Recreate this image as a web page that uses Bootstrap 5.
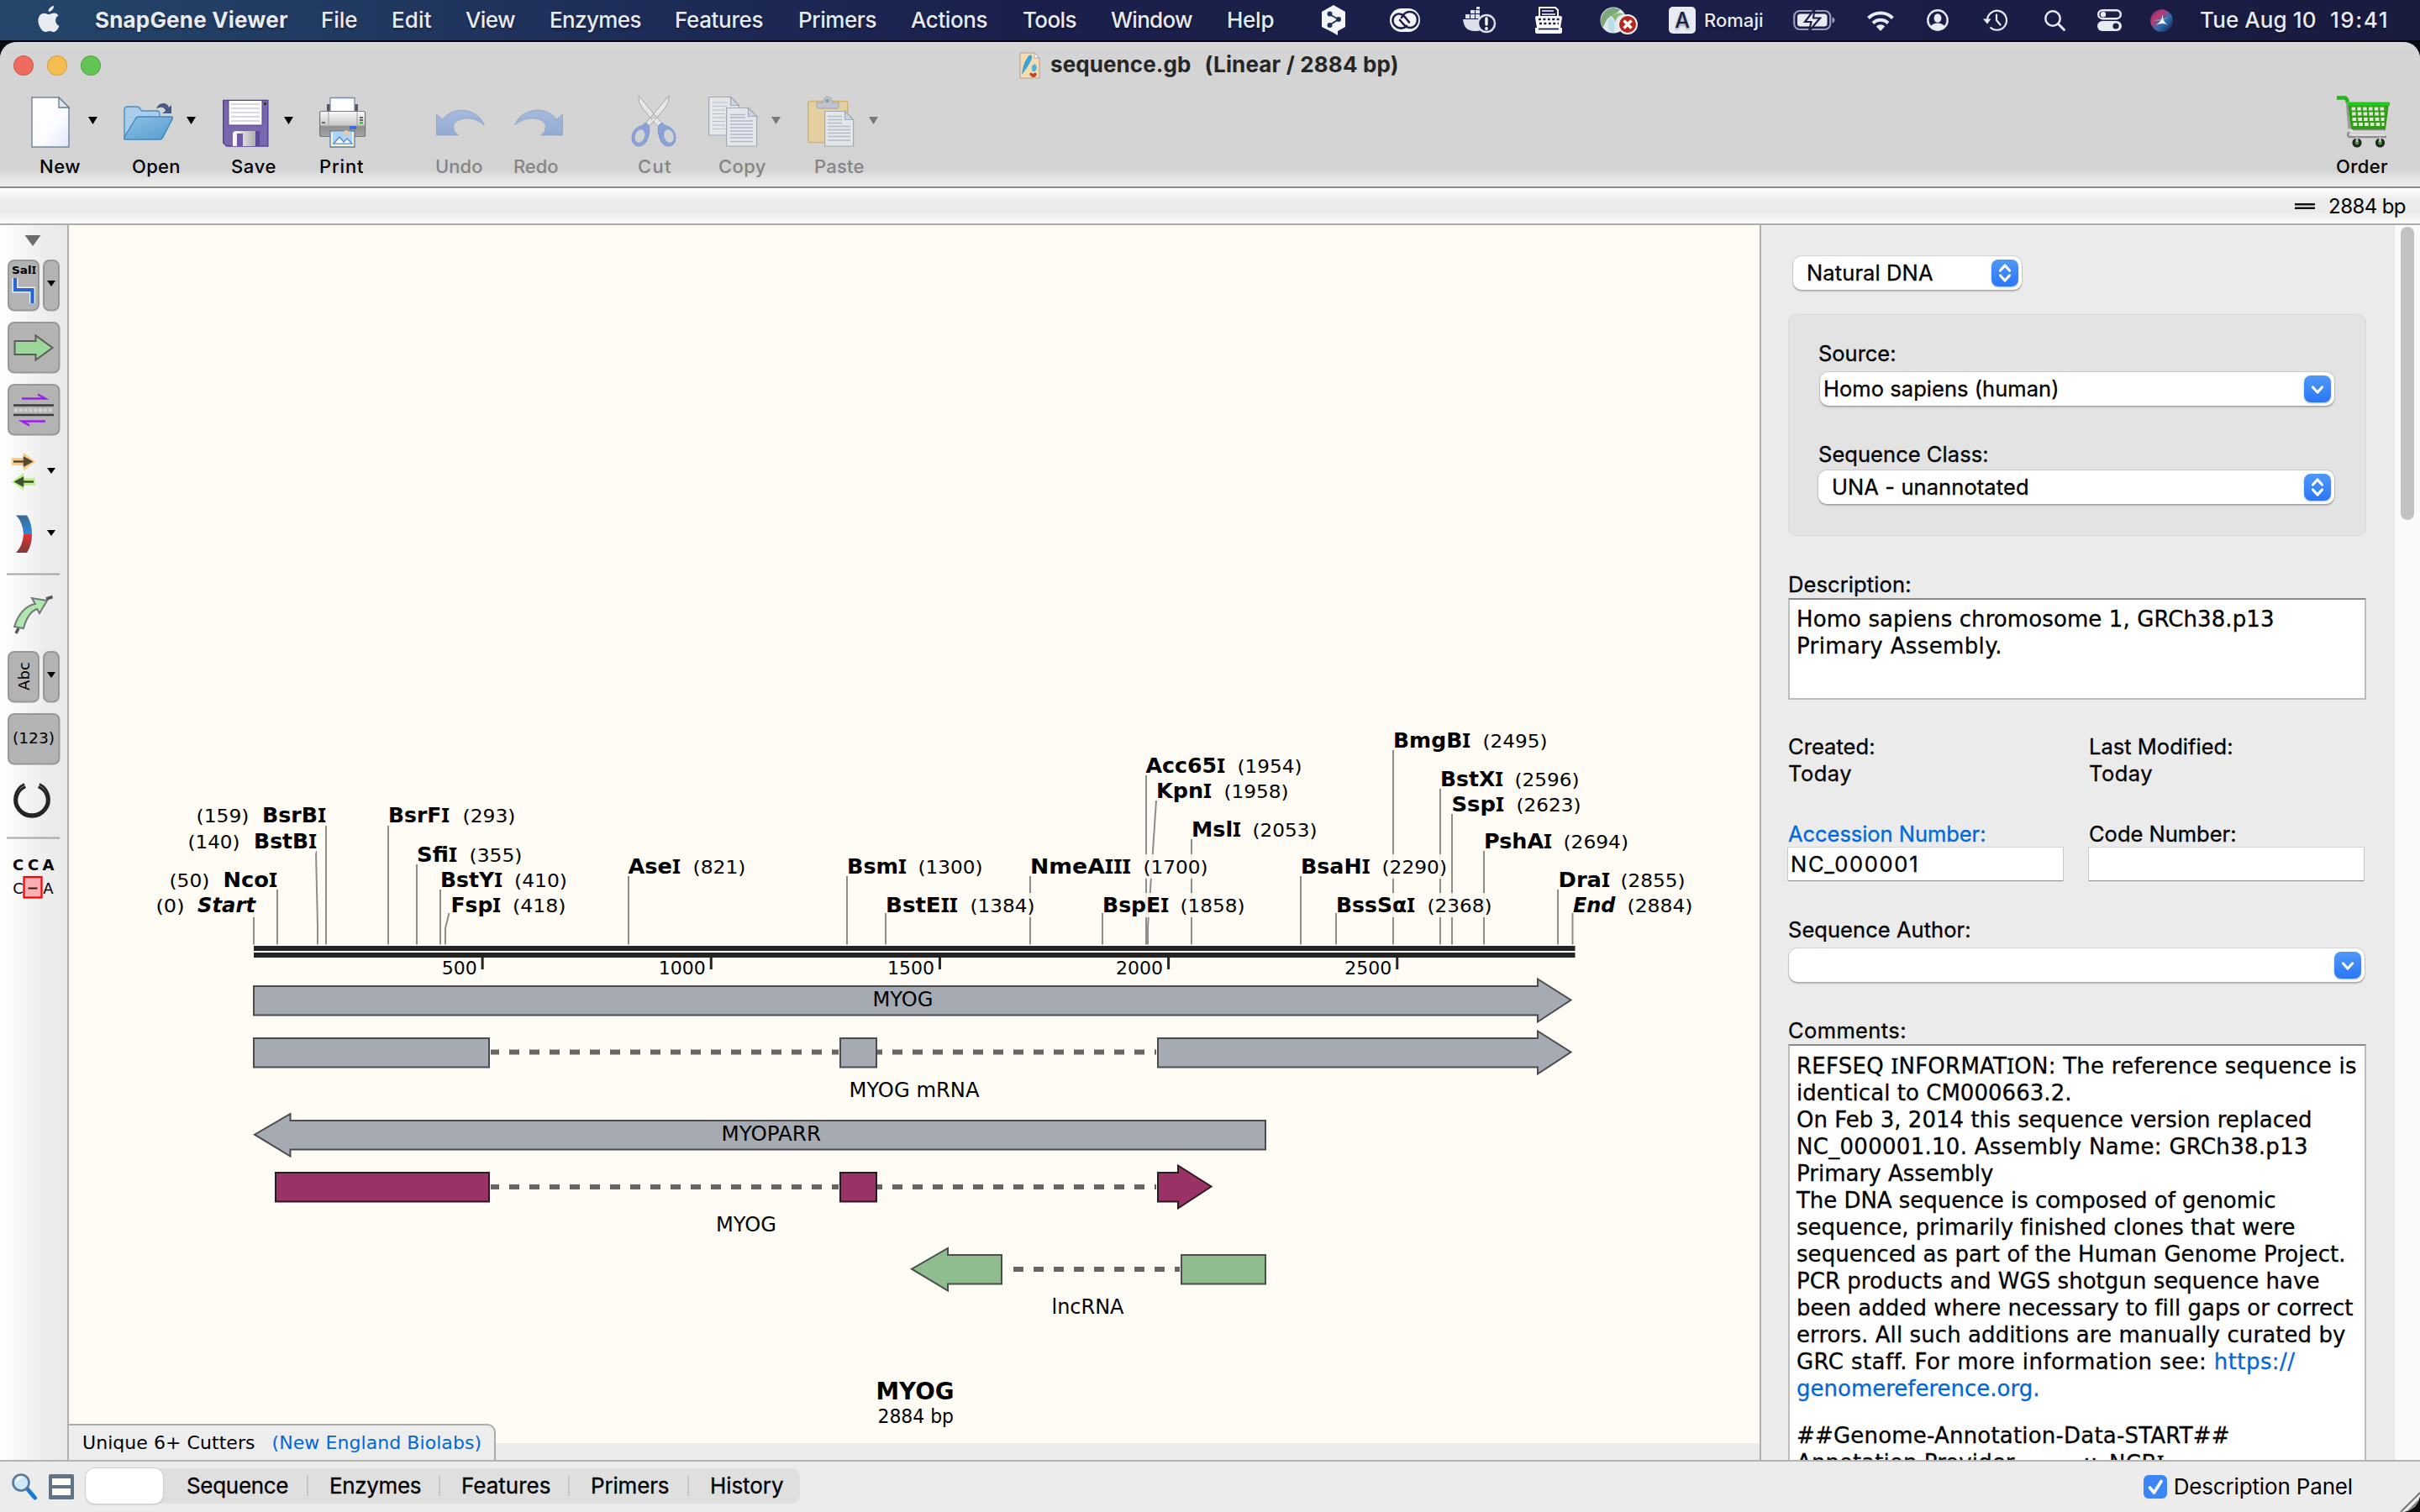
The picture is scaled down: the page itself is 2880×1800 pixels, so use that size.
<!DOCTYPE html>
<html lang="en">
<head>
<meta charset="utf-8">
<title>SnapGene Viewer</title>
<link href="https://cdn.jsdelivr.net/npm/bootstrap@5.3.0/dist/css/bootstrap.min.css" rel="stylesheet">
<style>
:root{--ui:Inter,"Liberation Sans",sans-serif;--vd:"DejaVu Sans",sans-serif}
html,body{height:100%;margin:0}
body{width:2880px;height:1800px;overflow:hidden;background:#0b0b12;font-family:var(--ui);font-size:26px;line-height:32px;color:#000}
svg{display:block;overflow:visible;flex:none}
.fit{display:inline-block;white-space:pre}
.vd{font-family:var(--vd)}
.cap-i{font-family:"Noto Sans",sans-serif}
.blue-link{color:#0068d9}

/* system menu bar */
.menubar{height:50px;padding:1px 0 1px 44px;border-bottom:2px solid #04060f;color:#e9ebf2;font-weight:500;
 background:linear-gradient(90deg,#25466a 0,#213a62 400px,#1d2b57 800px,#1a1f4b 1250px,#1b1f4a 2100px,#191b3f 100%);
 display:grid;align-items:center;text-shadow:0 2px 3px rgba(0,0,0,.4);
 grid-template-columns:69px 269px 84px 88px 100px 149px 147px 134px 133px 105px 138px 112px 81px 88px 85px 78px 82px 42px 106px 88px 71px 67px 73px 63px 63px 59px 155px auto}
.menubar b{font-weight:700}

/* window */
.app-window{height:1750px;border-radius:20px 20px 22px 0;overflow:hidden;background:#ececec}
.window-head{height:174px;border-bottom:2px solid #8b8b8b;background:linear-gradient(#d8d8d8 0,#d4d4d4 12px,#d3d3d3 152px,#e8e8e8 165px,#ebebeb)}
.title-row{height:56px;display:grid;grid-template-columns:1212px auto 1fr;align-items:center}
.lights{display:flex;gap:16px;padding-left:16px}
.light{width:24px;height:24px;border-radius:50%;border:1px solid rgba(0,0,0,.15)}
.light-r{background:#ee6a5f}.light-y{background:#f5bd4f}.light-g{background:#61c454}
.title-text{font-weight:700;color:#262626;padding-left:11px;margin-top:-2px}
.tools{display:grid;grid-template-columns:110px 118px 115px 139px 92px 140px 92px 118px 1819px auto;padding:7px 0 0 37px;font-size:22px;font-weight:500}
.tools .tool-label{line-height:28px;display:block;margin-top:7px;white-space:pre}
.off{color:#858585}
.lm1{margin-left:-1px}.l0{margin-left:0}.l1{margin-left:1px}.l8{margin-left:8px}.l11{margin-left:10px}.l12{margin-left:12px}
.infobar{height:44px;border-bottom:2px solid #ababab;background:linear-gradient(#fff 0,#ececec 14px,#ebebeb 28px,#fbfbfb 42px);padding:1px 17px 0 0;font-size:24px}

/* body of the window */
.work{height:1472px;border-bottom:2px solid #b4b4b4}
.rail{width:82px;border-right:2px solid #b0b0b0;background:linear-gradient(90deg,#fff 0,#ececec 56px,#e9e9e9)}
.map-pane{width:2012px;background:#fffcf5;position:relative}
.map-foot{height:20px;background:#ebebeb;position:absolute;left:0;right:0;bottom:0}
.set-tab{position:absolute;left:0;bottom:0;height:43px;width:508px;background:#ededed;border:2px solid #aaa;border-left:0;border-bottom:0;border-radius:0 10px 0 0;padding:2px 0 0 16px;font-family:var(--vd);font-size:22px;line-height:38px;display:flex;gap:20px}
.panel{width:786px;border-left:2px solid #b0b0b0;background:#ebebeb;font-size:25.5px;-webkit-text-stroke:.3px}
.panel-body{width:753px;padding:0 0 0 32px;overflow:hidden}
.panel-body>*{flex:none}
.track{width:31px;background:#fafafa;border-left:1px solid #e3e3e3;padding:2px 0 0 7px}
.thumb{width:16px;height:349px;border-radius:8px;background:#c2c2c2}
.pop{background:#fff;border-radius:10px;height:40px;box-shadow:0 0 0 1px rgba(0,0,0,.1),0 2px 2px rgba(0,0,0,.22);display:flex;align-items:center;justify-content:space-between;padding-right:4px}
.knob{width:32px;height:32px;border-radius:8px;background:linear-gradient(#4f99f9,#2a76f5);box-shadow:0 1px 2px rgba(0,40,140,.35)}
.group-box{width:688px;height:264px;border-radius:10px;border:1px solid #d9d9d9;background:#e3e3e3;padding:0 37px 0 35px;margin-top:29px}
.text-area{width:688px;background:#fff;border:2px solid #bcbcbc;border-top-color:#898989;padding:7px 0 0 8px;font-family:var(--vd);font-size:26px;white-space:pre}
.field{width:327px;height:39px;background:#fff;box-shadow:0 0 0 1px rgba(0,0,0,.1),0 1px 1px rgba(0,0,0,.3);padding-left:3px;line-height:39px}

/* bottom strip */
.strip{height:60px;background:#ececec;padding-left:14px}
.segs{height:42px;width:850px;background:#dfdfdf;border-radius:10px;display:grid;grid-template-columns:120px 170px 157px 154px 142px auto;align-items:center}
.seg-on{width:92px;height:42px;background:#fff;border-radius:11px;box-shadow:0 0 0 1px #cfcfcf,0 1px 2px rgba(0,0,0,.3)}
.seg{position:relative;-webkit-text-stroke:.3px}
.seg:not(:last-child)::after{content:"";position:absolute;right:25px;top:4px;height:24px;width:2px;background:#c6c6c6}
</style>
</head>
<body>

<nav class="menubar">
 <svg width="28" height="34" viewBox="0 0 28 34"><path fill="#e9ebf2" d="M20 0c.3 3.300-2.800 7-6.300 6.800C13.300 3.600 16.700.4 20 0zM25.500 11.600c-2.400 1.500-3.400 3.500-3.400 5.900 0 3 1.800 5.200 4.300 6.200-1 3-3.500 7.300-6.300 7.300-1.900 0-2.700-1.100-5.100-1.100s-3.300 1.100-5.200 1.100C6 31 1.400 23.500 1.400 17.600c0-5.600 3.600-8.900 7.300-8.900 2.300 0 3.900 1.400 5.700 1.400 1.700 0 3.500-1.600 6.300-1.600 1.900 0 3.700 1.100 4.800 3.100z"/></svg>
 <b><span class="fit" data-w="227">SnapGene Viewer</span></b>
 <span><span class="fit" data-w="41">File</span></span><span><span class="fit" data-w="45">Edit</span></span><span><span class="fit" data-w="57">View</span></span><span><span class="fit" data-w="107">Enzymes</span></span><span><span class="fit" data-w="103">Features</span></span><span><span class="fit" data-w="91">Primers</span></span><span><span class="fit" data-w="89">Actions</span></span><span><span class="fit" data-w="62">Tools</span></span><span><span class="fit" data-w="95">Window</span></span><span><span class="fit" data-w="54">Help</span></span>
 <svg width="30" height="36" viewBox="0 0 30 36"><path fill="#f4f5f8" d="M15 0 29 8v18l-9 5v5l-7-4L1 26V8z"/><path d="M10 11l11 6-11 7" fill="none" stroke="#1f3358" stroke-width="1.800"/><g fill="#1f3358"><circle cx="10.500" cy="10.500" r="3"/><circle cx="21" cy="17" r="3"/><circle cx="10.500" cy="24" r="3"/></g></svg>
 <svg width="38" height="28" viewBox="0 0 38 28"><rect x="1" y="0" width="36" height="28" rx="14" fill="#f4f5f8"/><g fill="none" stroke="#1b1f4a" stroke-width="2.600" stroke-linecap="round"><path d="M21 21c-2 2-5 3-8 2.500-5-.8-9-5-8.500-10S9 6 13 6.500c3 .3 5 2.500 7 5l4 5"/><path d="M15 11c2-4 5-7 9.500-7 5.500 0 9.500 4 9.500 9.500S30 23 25 23c-3.500 0-6-2-8-4.500L13 14"/></g></svg>
 <svg width="39" height="32" viewBox="0 0 39 32"><g fill="#dcdee8"><path d="M0 15h21a12 12 0 0 0 1 13c-3 1-6 1-8 1C5 29 1 24 0 15z"/><path d="M3 9h5v5H3zM9 9h5v5H9zM15 9h5v5h-5zM9 4h5v4H9zM15 4h5v4h-5zM16 0h4v3h-4z"/></g><circle cx="28" cy="20" r="10" fill="#1b1f4a" stroke="#dcdee8" stroke-width="2.400"/><path d="M28 14v7" stroke="#fff" stroke-width="3.400" stroke-linecap="round"/><circle cx="28" cy="26" r="1.900" fill="#fff"/></svg>
 <svg width="34" height="32" viewBox="0 0 34 32"><path d="M6 11V1h19l3 3v7" fill="none" stroke="#fff" stroke-width="2"/><path d="M9 5h14M9 9h16" stroke="#fff" stroke-width="1.600"/><path fill="#fff" d="M1 13q0-2 2-2h28q2 0 2 2l-2 12h2v5q0 2-2 2H3q-2 0-2-2v-5h2z"/><path d="M5 15h25M6 20h23" stroke="#1b1f4a" stroke-width="2.600" stroke-dasharray="3 2.400"/><path d="M5 26.500h24" stroke="#1b1f4a" stroke-width="1.800"/></svg>
 <svg width="45" height="33" viewBox="0 0 45 33"><circle cx="16" cy="16" r="15.500" fill="#dfe7ea"/><path d="M1 20C0 9 7 2 16 1l8 2c-2 4-6 5-11 8-6 4-7 10-9 13q-2-1-3-4z" fill="#7fa878"/><path d="M12 12c6 4 7 11 4 19-8-3-7-12-4-19z" fill="#b7dcea"/><path d="M13 11q8-6 16-2-8 0-11 9-1-5-5-7z" fill="#8ab87a"/><circle cx="33" cy="21" r="11" fill="#b3261b" stroke="#f1f1f1" stroke-width="2"/><path d="M28.500 16.500l9 9m0-9l-9 9" stroke="#fff" stroke-width="3.600"/></svg>
 <svg width="32" height="32" viewBox="0 0 32 32"><rect width="32" height="32" rx="5" fill="#e9ebf2"/><text x="16" y="25" text-anchor="middle" font-family="Inter" font-size="25" font-weight="500" fill="#1b1f4a">A</text></svg>
 <span style="font-size:22px"><span class="fit" data-w="68">Romaji</span></span>
 <svg width="50" height="26" viewBox="0 0 50 26"><rect x="1.200" y="2" width="43" height="22" rx="6.500" fill="none" stroke="#9b9dba" stroke-width="2.200"/><rect x="5" y="5.500" width="35.500" height="15" rx="3.500" fill="#e9ebf2"/><path d="M46.500 9.500v7q3-1 3-3.500t-3-3.500z" fill="#9b9dba"/><path d="M25.500 0 14 15h7.500L19 26l13-15.500h-8z" fill="#e9ebf2" stroke="#1b1f4a" stroke-width="2.200"/></svg>
 <svg width="32" height="25" viewBox="0 0 32 25"><g fill="none" stroke="#e9ebf2" stroke-width="4"><path d="M1.500 9.500a20.500 20.500 0 0 1 29 0"/><path d="M7 15.500a12.800 12.800 0 0 1 18 0"/></g><path d="M16 25l-5.200-5.600a7.400 7.400 0 0 1 10.400 0z" fill="#e9ebf2"/></svg>
 <svg width="26" height="26" viewBox="0 0 26 26"><circle cx="13" cy="13" r="11.700" fill="none" stroke="#e9ebf2" stroke-width="2.400"/><ellipse cx="13" cy="10.500" rx="4.400" ry="5.300" fill="#e9ebf2"/><path d="M4 21q3-4.500 9-4.500t9 4.500a12 12 0 0 1-18 0z" fill="#e9ebf2"/></svg>
 <svg width="29" height="26" viewBox="0 0 29 26"><path d="M5 13A11.500 11.500 0 1 1 8.500 21.500" fill="none" stroke="#e9ebf2" stroke-width="2.200"/><path d="M0 11.500h9.500L5 17.500z" fill="#e9ebf2"/><path d="M16 6.500V13l4.500 5.500" fill="none" stroke="#e9ebf2" stroke-width="2.200" stroke-linecap="round"/></svg>
 <svg width="25" height="25" viewBox="0 0 25 25"><circle cx="10" cy="10" r="8.700" fill="none" stroke="#e9ebf2" stroke-width="2.500"/><path d="M16.500 16.500 23.500 23.500" stroke="#e9ebf2" stroke-width="2.900" stroke-linecap="round"/></svg>
 <svg width="29" height="26" viewBox="0 0 29 26"><rect x="1.200" y="1.200" width="26.600" height="10" rx="5" fill="none" stroke="#e9ebf2" stroke-width="2.400"/><circle cx="7" cy="6.200" r="3.200" fill="#e9ebf2"/><rect y="14" width="29" height="12" rx="6" fill="#e9ebf2"/><circle cx="22" cy="20" r="3.600" fill="#1b1f4a"/></svg>
 <svg width="27" height="27" viewBox="0 0 27 27"><defs><linearGradient id="si" x1="0" y1="0" x2="1" y2="1"><stop offset="0" stop-color="#4b2a86"/><stop offset=".3" stop-color="#c1386d"/><stop offset=".6" stop-color="#2b6fae"/><stop offset="1" stop-color="#1b1440"/></linearGradient></defs><circle cx="13.500" cy="13.500" r="13.300" fill="url(#si)"/><path d="M6 19q7-3 9-13-1 8 6 13-5-4-15 0z" fill="#f2f6ff"/><path d="M4 13q9 0 18-4-8 6-18 4z" fill="#7fe0e8" opacity=".8"/></svg>
 <span><span class="fit" data-w="136">Tue Aug 10</span></span><span><span class="fit" data-w="66">19:41</span></span>
</nav>

<main class="app-window">
 <header class="window-head">
  <div class="title-row">
   <div class="lights"><div class="light light-r"></div><div class="light light-y"></div><div class="light light-g"></div></div>
   <svg width="27" height="32" viewBox="0 0 27 32"><path d="M2 1h17l6 6v24H2z" fill="#f3ddb0" stroke="#b99" stroke-width="1"/><path d="M19 1l6 6h-6z" fill="#fff" stroke="#999" stroke-width=".800"/><path d="M4 27C5 17 8 8 14 3q4 2 1 7C12 16 8 22 4 27z" fill="#3ca3da"/><path d="M17 23q-3-6 2-9 5 3 1 9z" fill="#4db1e2"/><path d="M13 26q2-3 4 0 3-3 5 0-1 4-4 4t-5-4z" fill="#c8432f"/></svg>
   <div class="title-text d-flex"><span class="fit" data-w="165">sequence.gb</span><span class="fit ms-3" data-w="228">(Linear / 2884 bp)</span></div>
  </div>
  <div class="tools">
   <div><svg width="80" height="64" viewBox="37 114 80 64"><defs><linearGradient id="pg" x1="0" y1="0" x2="1" y2="1"><stop offset="0" stop-color="#fff"/><stop offset=".6" stop-color="#fbfcff"/><stop offset="1" stop-color="#dfe7f8"/></linearGradient></defs><path d="M38 117h32l12 12v47H38z" fill="url(#pg)" stroke="#76879c" stroke-width="1.500"/><path d="M70 117v12h12z" fill="#dde3ef" stroke="#63788f" stroke-width="1.300"/><path d="M105 140h11l-5.500 9z"/></svg><span class="tool-label l11"><span class="fit" data-w="46">New</span></span></div>
   <div><svg width="86" height="64" viewBox="147 114 86 64"><defs><linearGradient id="fo" x1="0" y1="0" x2="1" y2="1"><stop offset="0" stop-color="#8fc1e4"/><stop offset="1" stop-color="#559cd0"/></linearGradient></defs><path d="M148 165v-33q0-4 4-4h11q3 0 4 3l2 2h18q3 0 3 4v28z" fill="#a9cdea" stroke="#4a8fc2" stroke-width="1.400"/><path d="M161 143q1-3 4-3h39q2 0 1 3l-11 21q-1 3-4 3h-41q-2 0-1-3z" fill="url(#fo)" stroke="#3f87bd" stroke-width="1.400"/><path d="M186 131q2-8 10-7 4 1 5 5l3-3v10h-11l4-3q-1-4-4-4-4-1-7 2z" fill="#455b85"/><path d="M222 140h11l-5.500 9z"/></svg><span class="tool-label l11"><span class="fit" data-w="55">Open</span></span></div>
   <div><svg width="84" height="64" viewBox="265 114 84 64"><defs><linearGradient id="sh" x1="0" y1="0" x2="1" y2="0"><stop offset="0" stop-color="#fff"/><stop offset="1" stop-color="#a8a8a8"/></linearGradient></defs><path d="M265.800 120.500h53v54.500h-49l-4-4z" fill="#7a66ad" stroke="#54429a" stroke-width="1.500"/><path d="M272 120.500h40V150h-40z" fill="#fdfdff" stroke="#54429a"/><path d="M275 125h34M275 130h34M275 135h34M275 140h34M275 145h34" stroke="#c9ccd4" stroke-width="1.300"/><path d="M314 123h3v3h-3z" fill="#333"/><path d="M277 175v-14q0-4 4-4h25v18z" fill="url(#sh)"/><path d="M304 157h5v18h-5z" fill="#5a4699"/><path d="M282 160h7v15h-7z" fill="#6f5aa6"/><path d="M338 140h11l-5.500 9z"/></svg><span class="tool-label l11"><span class="fit" data-w="51">Save</span></span></div>
   <div><svg width="56" height="64" viewBox="380 114 56 64"><defs><linearGradient id="pr" x1="0" y1="0" x2="0" y2="1"><stop offset="0" stop-color="#fafafa"/><stop offset=".55" stop-color="#c9c9c9"/><stop offset=".6" stop-color="#8f8f8f"/><stop offset="1" stop-color="#a5a5a5"/></linearGradient></defs><path d="M389 125h37v38h-37z" fill="#555a66"/><path d="M393 117.500h29V134h-29z" fill="#fdfeff" stroke="#7b8ba3" stroke-width="1.300"/><rect x="380.600" y="133.500" width="54" height="30" rx="2" fill="url(#pr)" stroke="#777" stroke-width="1.200"/><path d="M391 134v16M425 134v16" stroke="#9c9c9c"/><path d="M383 146h4v2h-4zM428 140h4v2h-4zM428 143h4v2h-4z" fill="#666"/><path d="M428 146h4v2.500h-4z" fill="#2bd02b"/><path d="M416 151h8v4h-8z" fill="#3a6be0"/><path d="M393 157h29v19h-29z" fill="#f6f1cf" stroke="#5f7f9c" stroke-width="1.300"/><path d="M396 157.500h23V173h-23z" fill="#a9d6f5"/><circle cx="412" cy="159" r="3" fill="#f6c6a2"/><path d="M397 172l7-8 5 6 4-4 6 6z" fill="#fff" stroke="#4d82d8" stroke-width="1.200"/></svg><span class="tool-label l0"><span class="fit" data-w="50">Print</span></span></div>
   <div><svg width="60" height="64" viewBox="519 114 60 64"><defs><linearGradient id="un" x1="0" y1="0" x2="0" y2="1"><stop offset="0" stop-color="#a5b9dc"/><stop offset="1" stop-color="#93abd3"/></linearGradient></defs><path id="undo" d="M519.500 137l7 6q9-11 23-11 20 1 27 18-10-9-23-8-14 2-14 10 0 6 6 10h-26z" fill="url(#un)" stroke="#8da4cb" stroke-width=".800"/></svg><span class="tool-label off lm1"><span class="fit" data-w="54">Undo</span></span></div>
   <div><svg width="60" height="64" viewBox="519 114 60 64"><use href="#undo" transform="matrix(-1 0 0 1 1097 0)"/></svg><span class="tool-label off l0"><span class="fit" data-w="51">Redo</span></span></div>
   <div><svg width="56" height="64" viewBox="751 114 56 64"><path d="M760 115q-1 8 4 14l20 24 4-5zM796 115q1 8-4 14l-21 24-3-5z" fill="#e4e6e8" stroke="#a4a9af" stroke-width="1"/><path d="M772 150q2 6-1 15-3 10-11 10-8-1-8-10 0-9 8-13 6-1 8-5zM784 150q-2 6 1 15 3 10 11 10 8-1 8-10 0-9-8-13-6-1-8-5z" fill="#8ba2d8" stroke="#7e96cd"/><ellipse cx="761.500" cy="163" rx="5.500" ry="8" fill="#d3d3d3" transform="rotate(18 761.500 163)"/><ellipse cx="796" cy="163" rx="5.500" ry="8" fill="#d3d3d3" transform="rotate(-18 796 163)"/><circle cx="777.500" cy="143.500" r="1.800" fill="#f4f4f4" stroke="#aaa" stroke-width=".600"/></svg><span class="tool-label off l8"><span class="fit" data-w="37">Cut</span></span></div>
   <div><svg width="86" height="64" viewBox="843 114 86 64"><g fill="#e4e7ea" stroke="#a0aab4" stroke-width="1.200"><path d="M843.600 116.500h26l10 10V162h-36z"/><path d="M869.500 116.500v10h10z" fill="#ccd4e2"/><path d="M864.600 129.500h26l10 10V175h-36z"/><path d="M890.500 129.500v10h10z" fill="#ccd4e2"/></g><path d="M848 123h18M848 127.500h18M848 132h15M848 136.500h15M848 141h15M848 145.500h15M848 150h15M848 154.500h15" stroke="#b8bdc6" stroke-width="1.200"/><path d="M869 137.500h18M869 141h18M869 145h27M869 149h27M869 153h27M869 157h27M869 161h27M869 165h27M869 169.500h27" stroke="#b0b8cc" stroke-width="1.400"/><path d="M918 140h11l-5.500 9z" fill="#7a7a7a"/></svg><span class="tool-label off l12"><span class="fit" data-w="54">Copy</span></span></div>
   <div><svg width="84" height="64" viewBox="961 114 84 64"><rect x="961.700" y="121.500" width="47" height="49" rx="2" fill="#e3cfa0" stroke="#d2b271" stroke-width="1.500"/><path d="M972 123h8q-1-6 5-7 6 1 5 7h8v5q0 2-2 2h-22q-2 0-2-2z" fill="#bdc6cf" stroke="#9ba5af"/><circle cx="984.500" cy="121" r="2.300" fill="#8e979f"/><g fill="#e4e7ea" stroke="#a0aab4" stroke-width="1.200"><path d="M981.600 133.500h24l10 10V175h-34z"/><path d="M1005.500 133.500v10h10z" fill="#ccd4e2"/></g><path d="M985 139.500h17M985 143.500h17M985 147.500h17M985 151.500h27M985 155.500h27M985 159.500h27M985 163.500h27M985 168h27" stroke="#b4bac6" stroke-width="1.300"/><path d="M1034 140h11l-5.500 9z" fill="#7a7a7a"/></svg><span class="tool-label off l8"><span class="fit" data-w="57">Paste</span></span></div>
   <div><svg width="64" height="64" viewBox="2780 114 64 64"><path d="M2783 117h7q3 0 3 4l3 33" fill="none" stroke="#999" stroke-width="3"/><path d="M2781 117.500h9q3 0 4 5" fill="none" stroke="#27b51c" stroke-width="4.500"/><path d="M2794 124h49l-4 31h-41z" fill="#2f9e14"/><path d="M2794 122.500h50v4.500h-50z" fill="#1fc91a"/><path d="M2798.500 130.500h41M2799 136.500h40M2799.500 143h38M2800.500 149h37" stroke="#dfe9d6" stroke-width="3.800" stroke-dasharray="4.600 2.200"/><path d="M2800 156h39M2796 158q-4 4 0 6h44" fill="none" stroke="#8c8c8c" stroke-width="2.400"/><path d="M2797 157h42M2799 162h39" stroke="#f5f5f5" stroke-width="1.200"/><g fill="#2fae1c" stroke="#222" stroke-width="3.200"><circle cx="2805" cy="171" r="4"/><circle cx="2832.500" cy="171" r="4"/></g><path d="M2805 164v6M2832.500 164v6" stroke="#bbb" stroke-width="3"/></svg><span class="tool-label l0"><span class="fit" data-w="59">Order</span></span></div>
  </div>
 </header>
 <div class="infobar d-flex align-items-center justify-content-end"><svg width="24" height="7" class="me-3"><path d="M0 1.300h24M0 5.700h24" stroke="#111" stroke-width="2.500"/></svg><span class="fit" data-w="90">2884 bp</span></div>

 <div class="work d-flex">
  <aside class="rail">
   <svg width="80" height="820" viewBox="0 268 80 820">
    <defs><g id="caret"><path d="M-5 -4h10l-5 7z" fill="#000"/></g></defs>
    <path d="M29.500 280h19l-9.500 13z" fill="#6c6c6c"/>
    <g fill="#b3b3b3" stroke="#989898" stroke-width="2"><rect x="10" y="310" width="36" height="59.500" rx="7"/><rect x="52" y="310" width="18" height="59.500" rx="7"/><rect x="10" y="384" width="60.500" height="59.500" rx="7"/><rect x="10" y="458" width="60.500" height="59.500" rx="7"/><rect x="10" y="776" width="36" height="59.500" rx="7"/><rect x="52" y="776" width="18" height="59.500" rx="7"/><rect x="10" y="850" width="60.500" height="59.500" rx="7"/></g>
    <text x="14" y="326" font-family="DejaVu Sans" font-weight="700" font-size="13" textLength="29" lengthAdjust="spacingAndGlyphs">Sal<tspan class="cap-i">I</tspan></text>
    <path d="M18 331v14h20.500v16" fill="none" stroke="#eef2fa" stroke-width="7"/><path d="M18 331v14h20.500v16" fill="none" stroke="#2a63d4" stroke-width="4.200"/>
    <use href="#caret" x="61" y="338"/><use href="#caret" x="61" y="561"/><use href="#caret" x="61" y="635"/><use href="#caret" x="61" y="804"/>
    <path d="M17.500 406h25v-6.500l20 14.500-20 14.500V422h-25z" fill="#9bd79b" stroke="#5c5c5c" stroke-width="2"/>
    <path d="M16 482.500h48M16 494h48" stroke="#3d3d3d" stroke-width="2.500"/><path d="M17 488.300h46" stroke="#d2d2d2" stroke-width="4" stroke-dasharray="4 1.800"/>
    <path d="M26 474.500h28l-9-5M54 501.500H26l9 5" fill="none" stroke="#9a1fef" stroke-width="2.400"/>
    <path d="M14 545h14v-6l14 10.500L28 560v-6H14z" fill="#fbca7d"/><path d="M16 549.500h15M29 545l8 4.500-8 4.500z" stroke="#584935" stroke-width="2.400" fill="#584935"/>
    <path d="M42 569H28v-6l-14 10.500L28 584v-6h14z" fill="#bdf287"/><path d="M40 573.500H25M27 569l-8 4.500 8 4.500z" stroke="#3e5330" stroke-width="2.400" fill="#3e5330"/>
    <defs><linearGradient id="bl" x1="0" y1="0" x2="0" y2="1"><stop offset="0" stop-color="#3a688c"/><stop offset="1" stop-color="#2d8be0"/></linearGradient><linearGradient id="rd" x1="0" y1="0" x2="0" y2="1"><stop offset="0" stop-color="#e53030"/><stop offset="1" stop-color="#7c3a3a"/></linearGradient></defs>
    <path d="M19 613.500h13q6 9 6 22.500H28q-1-15-9-22.500z" fill="url(#bl)"/><path d="M19 658h13q6-9 6-22H28q-1 14-9 22z" fill="url(#rd)"/>
    <path d="M8 683.500h63M8 997.500h63" stroke="#a6a6a6" stroke-width="2"/>
    <path d="M18 745q8-24 25-27l-4-7 18 3-9 15-3-5q-11 4-16 23z" transform="translate(-1 1)" fill="#aee8ae" stroke="#777" stroke-width="2"/><path d="M55 713l7.500-2.500M22 748l-3 6" stroke="#555" stroke-width="3.500"/>
    <text transform="translate(35 822) rotate(-90)" font-family="DejaVu Sans" font-size="18" textLength="34">Abc</text>
    <text x="15" y="885" font-family="DejaVu Sans" font-size="18" textLength="50" lengthAdjust="spacingAndGlyphs">(123)</text>
    <g fill="none" stroke="#242424" transform="translate(0 -2)"><path d="M29 933.500a20.500 20.500 0 1 0 18 0" stroke-width="2.800" transform="translate(0 2)"/><path d="M29 936a21.500 20.500 0 1 0 18 0" transform="matrix(.85 0 0 .85 5.700 143)" stroke-width="3.600"/></g>
    <rect x="28.500" y="1044" width="21" height="24.500" fill="#fdaeb2" stroke="#f00" stroke-width="2.200"/>
    <g font-family="DejaVu Sans" font-size="18" text-anchor="middle"><text font-weight="700" y="1036"><tspan x="21.500">C</tspan><tspan x="39.500">C</tspan><tspan x="57.500">A</tspan></text><text y="1063.500"><tspan x="21.500">C</tspan><tspan x="57.500">A</tspan></text></g><path d="M33.500 1057.500h11" stroke="#222" stroke-width="2"/>
   </svg>
  </aside>

  <section class="map-pane">
   <div class="map-foot"></div>
   <svg id="map" class="position-relative" width="2012" height="1450" viewBox="82 268 2012 1450" font-family="DejaVu Sans, sans-serif"></svg>
   <div class="set-tab"><span class="fit" data-w="203">Unique 6+ Cutters</span><span class="fit blue-link" data-w="247">(New England Biolabs)</span></div>
  </section>

  <aside class="panel d-flex">
   <div class="panel-body d-flex flex-column">
    <div class="pop" style="width:272px;margin:37px 0 0 6px;padding-left:16px"><span class="fit" data-w="148">Natural DNA</span><svg class="knob" viewBox="0 0 32 32"><path d="M10.500 13 16 7l5.500 6M10.500 19l5.500 6 5.500-6" fill="none" stroke="#fff" stroke-width="3.200" stroke-linecap="round" stroke-linejoin="round"/></svg></div>
    <div class="group-box">
     <div style="padding-top:30px"><span class="fit" data-w="90">Source:</span></div>
     <div class="pop" style="margin:6px 0 0 2px;padding:0 4px 1px 4px"><span class="fit" data-w="278">Homo sapiens (human)</span><svg class="knob" viewBox="0 0 32 32"><path d="M10.500 14 16 20l5.500-6" fill="none" stroke="#fff" stroke-width="3.200" stroke-linecap="round" stroke-linejoin="round"/></svg></div>
     <div style="padding-top:42px"><span class="fit" data-w="200">Sequence Class:</span></div>
     <div class="pop" style="margin-top:3px;padding:0 4px 1px 16px"><span class="fit" data-w="232">UNA - unannotated</span><svg class="knob" viewBox="0 0 32 32"><path d="M10.500 13 16 7l5.500 6M10.500 19l5.500 6 5.500-6" fill="none" stroke="#fff" stroke-width="3.200" stroke-linecap="round" stroke-linejoin="round"/></svg></div>
    </div>
    <div style="padding-top:42px;height:74px"><span class="fit" data-w="144">Description:</span></div>
    <div class="text-area" style="height:121px"><div class="fit" data-w="566">Homo sapiens chromosome 1, GRCh38.p13</div>
<div class="fit" data-w="242">Primary Assembly.</div></div>
    <div class="d-flex" style="padding-top:40px"><div style="width:358px"><span class="fit" data-w="101">Created:</span><br><span class="fit" data-w="73">Today</span></div><div><span class="fit" data-w="169">Last Modified:</span><br><span class="fit" data-w="73">Today</span></div></div>
    <div class="d-flex" style="padding-top:40px;gap:31px"><div><span class="fit blue-link" data-w="233">Accession Number:</span><div class="field mt-0"><span class="fit" data-w="149">NC_000001</span></div></div><div><span class="fit" data-w="173">Code Number:</span><div class="field"></div></div></div>
    <div style="padding-top:43px"><span class="fit" data-w="215">Sequence Author:</span></div>
    <div class="pop" style="width:685px;margin:6px 0 0 1px;justify-content:flex-end"><svg class="knob" viewBox="0 0 32 32"><path d="M10.500 14 16 20l5.500-6" fill="none" stroke="#fff" stroke-width="3.200" stroke-linecap="round" stroke-linejoin="round"/></svg></div>
    <div style="padding-top:42px;height:74px"><span class="fit" data-w="138">Comments:</span></div>
    <div class="text-area" style="height:600px" id="comments"></div>
   </div>
   <div class="track"><div class="thumb"></div></div>
  </aside>
 </div>

 <footer class="strip d-flex align-items-center position-relative">
  <svg width="30" height="32" viewBox="0 0 30 32"><path d="M19 19l8.500 10" stroke="#1f7bd0" stroke-width="5" stroke-linecap="round"/><circle cx="11" cy="11" r="9.500" fill="#cfe9fb" stroke="#58799b" stroke-width="2.600"/><path d="M6 9q2-4 6-4" stroke="#fff" stroke-width="2.500" fill="none"/></svg>
  <svg width="30" height="30" viewBox="0 0 30 30" style="margin-left:14px"><rect width="30" height="30" rx="1.500" fill="#5f7585"/><path d="M4 5h22v8H4zM4 17h22v8H4z" fill="#fffcf5"/></svg>
  <div class="segs" style="margin-left:14px;margin-top:-2px"><div class="seg-on"></div><div class="seg"><span class="fit" data-w="119">Sequence</span></div><div class="seg"><span class="fit" data-w="107">Enzymes</span></div><div class="seg"><span class="fit" data-w="104">Features</span></div><div class="seg"><span class="fit" data-w="91">Primers</span></div><div class="seg"><span class="fit" data-w="85">History</span></div></div>
  <div class="d-flex align-items-center gap-2 ms-auto" style="padding-right:80px"><svg width="28" height="28" viewBox="0 0 28 28"><rect width="28" height="28" rx="6" fill="#3b85f7"/><path d="M7.500 15l5 6L21 7.500" fill="none" stroke="#fff" stroke-width="3.600" stroke-linecap="round" stroke-linejoin="round"/></svg><span class="fit" data-w="211">Description Panel</span></div>
  <svg class="position-absolute end-0 bottom-0" width="26" height="26"><path d="M3 26 26 3M11 26 26 11M19 26l7-7" stroke="#777" stroke-width="2"/></svg>
 </footer>
</main>

<script src="https://cdn.jsdelivr.net/npm/bootstrap@5.3.0/dist/js/bootstrap.bundle.min.js"></script>
<script>
const serifI = (s, tag) => s.replace(/I/g, `<${tag} class="cap-i">I</${tag}>`);

// Restriction sites: name, number, name start/end, number start/end, baseline, leader line points
const sites = [
 ['BsrBI','(159)',313,387,235,295,979,[[388,983]]],
 ['BstBI','(140)',303,376,225,284,1009.5,[[376,1013],[378,1102]]],
 ['NcoI','(50)',266.5,329,203,248,1055.7,[[330,1059]]],
 ['Start','(0)',236,303,187,218,1086,[[302,1087]]],
 ['BsrFI','(293)',463,534,552,612,979,[[462,983]]],
 ['SfiI','(355)',497,543,560,620,1025.7,[[496,1029]]],
 ['BstYI','(410)',525,597,613.5,673.5,1055.7,[[524,1059]]],
 ['FspI','(418)',537.5,595,611.5,672,1086,[[534.5,1087],[530,1105]]],
 ['AseI','(821)',748.5,809,826,886,1040,[[748,1043]]],
 ['BsmI','(1300)',1009,1078,1094,1168,1040,[[1008,1043]]],
 ['BstEII','(1384)',1055,1139,1156,1230,1086,[[1054,1087]]],
 ['NmeAIII','(1700)',1227,1345,1362,1436,1040,[[1226,1043]]],
 ['BspEI','(1858)',1313,1390,1406,1480,1086,[[1312,1087]]],
 ['Acc65I','(1954)',1364.5,1457,1474,1548,920,[[1364,923]]],
 ['KpnI','(1958)',1377,1441,1458,1532,950,[[1376,953],[1366,1104]]],
 ['MslI','(2053)',1419,1476,1492,1566,995.6,[[1418,999]]],
 ['BsaHI','(2290)',1549,1629.5,1646,1720.5,1040,[[1548,1043]]],
 ['BssSαI','(2368)',1591,1683,1700,1774,1086,[[1590,1087]]],
 ['BmgBI','(2495)',1659,1749,1766,1840,890,[[1658,893]]],
 ['BstXI','(2596)',1715,1788,1804,1878,936,[[1714,939]]],
 ['SspI','(2623)',1728.5,1789,1806,1880,966,[[1728,969]]],
 ['PshAI','(2694)',1767,1846,1862,1936.5,1009.5,[[1766,1013]]],
 ['DraI','(2855)',1855.5,1915,1930,2004,1055.7,[[1854,1059]]],
 ['End','(2884)',1873,1921.5,1938,2013,1086,[[1871.5,1087]]]
];
let o = '';
for (const s of sites) {
  const p = s[7], last = p[p.length-1];
  o += `<polyline points="${p.map(q=>q.join()).join(' ')} ${last[0]},1124.5" fill="none" stroke="#8d8d8b" stroke-width="2"/>`;
}
for (const s of sites) {
  const a = Math.min(s[2],s[4]), b = Math.max(s[3],s[5]);
  o += `<rect x="${a+3}" y="${s[6]-23}" width="${b-a-3}" height="29" fill="#fffcf5" opacity=".85"/>`;
}
const stretch = 'lengthAdjust="spacingAndGlyphs"';
for (const s of sites) {
  const it = s[0]=='Start'||s[0]=='End' ? ' font-style="italic"' : '';
  o += `<text x="${s[2]-1}" y="${s[6]}" font-size="24" font-weight="700"${it} textLength="${s[3]-s[2]+2}" ${stretch}>${serifI(s[0],'tspan')}</text>`;
  o += `<text x="${s[4]-1.5}" y="${s[6]}" font-size="22" textLength="${s[5]-s[4]+3}" ${stretch}>${s[1]}</text>`;
}
// Ruler
o += '<path d="M302 1129h1572.500M302 1137h1572.500" stroke="#242424" stroke-width="6"/>';
for (let n=500; n<=2500; n+=500) {
  const x = 302 + n*.5443;
  o += `<path d="M${x} 1140v14" stroke="#242424" stroke-width="3"/>`;
  o += `<text x="${x-6.500}" y="1160" font-size="22" text-anchor="end" textLength="${n<1000?42:56}" ${stretch}>${n}</text>`;
}
// Features
const dash = (x1,x2,y) => `<path d="M${x1} ${y}H${x2}" stroke="#666" stroke-width="6" stroke-dasharray="12" stroke-dashoffset="${(x1-582)%24}"/>`;
const box = (x1,x2,y,c) => `<rect x="${x1}" y="${y}" width="${x2-x1}" height="34.500" ${c}/>`;
const right = (x1,xb,x2,y,c) => `<path d="M${x1} ${y}H${xb}v-8.500L${x2} ${y+16.500}L${xb} ${y+42.500}v-8H${x1}z" ${c}/>`;
const left = (x1,xb,x2,y,c) => `<path d="M${x2} ${y}H${xb}v-8L${x1} ${y+16.700}L${xb} ${y+42.500}v-8H${x2}z" ${c}/>`;
const grey='fill="#a6abb3" stroke="#4a4b4d" stroke-width="2"', wine='fill="#993366" stroke="#2c1a22" stroke-width="2"', green='fill="#90bd90" stroke="#47504a" stroke-width="2"';
o += right(302,1830,1869.5,1174,grey);
o += box(302,582,1236,grey)+dash(584,998,1252.5)+box(1000,1043,1236,grey)+dash(1044,1376,1252.5)+right(1378,1830,1869.5,1236,grey);
o += left(303,345.5,1506,1334,grey);
o += box(328,582,1396,wine)+dash(584,998,1413)+box(1000,1043,1396,wine)+dash(1044,1376,1413)+right(1378,1402,1441.5,1396,wine);
o += left(1085,1128,1192,1494,green)+dash(1206,1404,1511)+box(1406,1506,1494,green);
const lab = (x1,x2,y,t,f=24,w=400) => `<text x="${x1-1.5}" y="${y}" font-size="${f}" font-weight="${w}" textLength="${x2-x1+3}" ${stretch}>${t}</text>`;
o += lab(1040,1109,1198,'MYOG')+lab(1012,1164,1306,'MYOG mRNA')+lab(860,975.5,1357.5,'MYOPARR')+lab(853.5,922.5,1465.5,'MYOG')+lab(1253,1336,1564,'lncRNA');
o += lab(1044,1134,1666,'MYOG',27.5,700)+lab(1046,1133.5,1693.5,'2884 bp',22.5);
document.getElementById('map').innerHTML = o;

// Comment lines: text, width
const lines = [['REFSEQ INFORMATION: The reference sequence is',664],['identical to CM000663.2.',325],['On Feb 3, 2014 this sequence version replaced',611],['NC_000001.10. Assembly Name: GRCh38.p13',606],['Primary Assembly',232],['The DNA sequence is composed of genomic',568],['sequence, primarily finished clones that were',591],['sequenced as part of the Human Genome Project.',651],['PCR products and WGS shotgun sequence have',620],['been added where necessary to fill gaps or correct',660],['errors. All such additions are manually curated by',651]];
let c = lines.map(l=>`<div><span class="fit" data-w="${l[1]}">${serifI(l[0],'span')}</span></div>`).join('');
c += '<div><span class="fit" data-w="592">GRC staff. For more information see: <span class="blue-link">https://</span></span></div><div><span class="fit blue-link" data-w="287">genomereference.org.</span></div>';
c += '<div style="padding-top:24px"><span class="fit" data-w="513">##Genome-Annotation-Data-START##</span></div><div class="d-flex"><span style="width:341px"><span class="fit" data-w="257">Annotation Provider</span></span><span style="width:31px">::</span><span class="fit" data-w="63">NCB'+serifI('I','span')+'</span></div>';
document.getElementById('comments').innerHTML = c;

// Letter spacing computed from each text's data width
document.querySelectorAll('.fit').forEach(e => {
  const n = e.textContent.length, w = e.getBoundingClientRect().width;
  e.style.letterSpacing = ((+e.dataset.w + 2.500 - w) / (n - 1)).toFixed(3) + 'px';
});
</script>
</body>
</html>
